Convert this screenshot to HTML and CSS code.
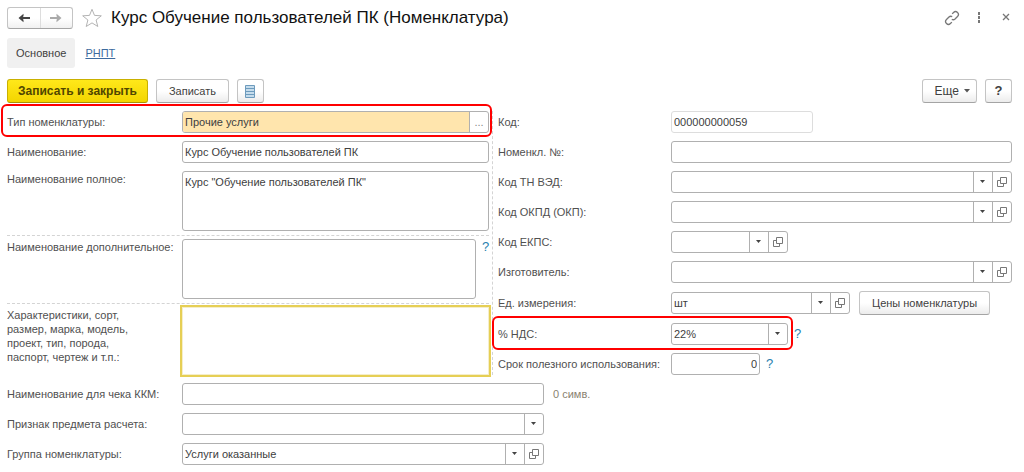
FILE: index.html
```
<!doctype html>
<html lang="ru">
<head>
	<meta charset="UTF-8">
	<meta name="viewport" content="width=device-width, initial-scale=1">
	<title>Курс Обучение пользователей ПК (Номенклатура)</title>
	<link rel="stylesheet" href="styles.css">
</head>
<body>
	<svg class="sprite" aria-hidden="true">
		<symbol id="open" viewBox="0 0 10 10"><path d="M3.500 .5h6v6h-6zM3.500 3.500h-3v6h6v-3" fill="none" stroke="#777"/></symbol>
	</svg>
	<header class="head">
		<div class="nav">
			<button type="button" aria-label="Назад"><svg width="14" height="10" viewBox="0 0 14 10"><path d="M13 5H4" stroke="#444" stroke-width="2"/><path d="M6.500 .8v2.400L4.800 5l1.700 1.800v2.400L1.500 5z" fill="#444"/></svg></button>
			<button type="button" aria-label="Вперед"><svg width="14" height="10" viewBox="0 0 14 10"><path d="M1 5h9" stroke="#aaa" stroke-width="2"/><path d="M7.500 .8v2.400L9.200 5 7.500 6.800v2.400l5-4.200z" fill="#aaa"/></svg></button>
		</div>
		<button type="button" class="icon star" aria-label="В избранное"><svg width="22" height="20" viewBox="0 0 22 20"><path d="M11 1.300l2.500 6.100 6.800.4-5.200 4.200 1.700 6.500L11 14.900l-5.800 3.600L6.900 12 1.700 7.800l6.800-.4z" fill="#fff" stroke="#b4b4b4"/></svg></button>
		<h1>Курс Обучение пользователей ПК (Номенклатура)</h1>
		<div class="tools">
			<button type="button" class="icon" aria-label="Ссылка"><svg width="16" height="16" viewBox="0 0 16 16"><g transform="rotate(-45 8 8)" fill="none" stroke="#777" stroke-width="1.300"><path d="M5 10.800H3a2.800 2.800 0 0 1 0-5.600h3.500a2.800 2.800 0 0 1 2.600 2M11 5.200h2a2.800 2.800 0 0 1 0 5.600H9.500a2.800 2.800 0 0 1-2.600-2"/></g></svg></button>
			<button type="button" class="icon" aria-label="Меню"><svg width="16" height="16" viewBox="0 0 16 16"><path d="M7 2h2v3H7zM7 6h2v3H7zM7 10h2v3H7z" fill="#777"/></svg></button>
			<button type="button" class="icon" aria-label="Закрыть"><svg width="16" height="16" viewBox="0 0 16 16"><path d="M5 4l6 6M11 4l-6 6" stroke="#777" stroke-width="1.300"/></svg></button>
		</div>
	</header>
	<nav class="tabs">
		<a href="#" class="active">Основное</a>
		<a href="#">РНПТ</a>
	</nav>
	<div class="toolbar">
		<button type="button" class="btn primary">Записать и закрыть</button>
		<button type="button" class="btn">Записать</button>
		<button type="button" class="btn small" aria-label="Список"><svg width="10" height="13" viewBox="0 0 10 13"><path d="M.5.5h9v12h-9z" fill="#c5dcec" stroke="#6d9bbd"/><path d="M1 3.500h8M1 6.500h8M1 9.500h8" stroke="#6d9bbd"/></svg></button>
		<button type="button" class="btn more">Еще <svg width="6" height="4" viewBox="0 0 6 4"><path d="M0 0h6L3 3.500z" fill="#555"/></svg></button>
		<button type="button" class="btn small question">?</button>
	</div>
	<form>
		<div class="columns">
			<div class="left">
				<div class="group">
					<div class="row marked">
						<label for="type">Тип номенклатуры:</label>
						<div class="field required"><input id="type" type="text" value="Прочие услуги"><button type="button" class="dots" aria-label="Выбрать">...</button></div>
					</div>
					<div class="row">
						<label for="name">Наименование:</label>
						<div class="field"><input id="name" type="text" value="Курс Обучение пользователей ПК"></div>
					</div>
					<div class="row tall">
						<label for="full">Наименование полное:</label>
						<textarea id="full">Курс "Обучение пользователей ПК"</textarea>
					</div>
				</div>
				<div class="group">
					<div class="row tall">
						<label for="extra">Наименование дополнительное:</label>
						<textarea id="extra"></textarea>
						<a href="#" class="help">?</a>
					</div>
				</div>
				<div class="group">
					<div class="row tall">
						<label for="features" class="multi"><span>Характеристики, сорт, размер, марка, модель, проект, тип, порода, паспорт, чертеж и т.п.:</span></label>
						<textarea id="features" class="current"></textarea>
					</div>
				</div>
			</div>
			<div class="right">
				<div class="row">
					<label for="code">Код:</label>
					<div class="field code"><input id="code" type="text" value="000000000059" readonly></div>
				</div>
				<div class="row">
					<label for="number">Номенкл. №:</label>
					<div class="field"><input id="number" type="text"></div>
				</div>
				<div class="row">
					<label for="tnved">Код ТН ВЭД:</label>
					<div class="field"><select id="tnved"><option></option></select><button type="button" aria-label="Открыть"><svg width="10" height="10"><use href="#open"/></svg></button></div>
				</div>
				<div class="row">
					<label for="okpd">Код ОКПД (ОКП):</label>
					<div class="field"><select id="okpd"><option></option></select><button type="button" aria-label="Открыть"><svg width="10" height="10"><use href="#open"/></svg></button></div>
				</div>
				<div class="row">
					<label for="ekps">Код ЕКПС:</label>
					<div class="field short"><select id="ekps"><option></option></select><button type="button" aria-label="Открыть"><svg width="10" height="10"><use href="#open"/></svg></button></div>
				</div>
				<div class="row">
					<label for="maker">Изготовитель:</label>
					<div class="field"><select id="maker"><option></option></select><button type="button" aria-label="Открыть"><svg width="10" height="10"><use href="#open"/></svg></button></div>
				</div>
				<div class="row">
					<label for="unit">Ед. измерения:</label>
					<div class="field unit"><select id="unit"><option>шт</option></select><button type="button" aria-label="Открыть"><svg width="10" height="10"><use href="#open"/></svg></button></div>
					<button type="button" class="btn prices">Цены номенклатуры</button>
				</div>
				<div class="row">
					<div class="row marked">
						<label for="vat">% НДС:</label>
						<div class="field short"><select id="vat"><option>22%</option></select></div>
					</div>
					<a href="#" class="help">?</a>
				</div>
				<div class="row">
					<label for="term">Срок полезного использования:</label>
					<div class="field term"><input id="term" type="text" value="0"></div>
					<a href="#" class="help">?</a>
				</div>
			</div>
		</div>
		<div class="bottom">
			<div class="row">
				<label for="kkm">Наименование для чека ККМ:</label>
				<div class="field"><input id="kkm" type="text"></div>
				<span class="count">0 симв.</span>
			</div>
			<div class="row">
				<label for="sign">Признак предмета расчета:</label>
				<div class="field"><select id="sign"><option></option></select></div>
			</div>
			<div class="row">
				<label for="group">Группа номенклатуры:</label>
				<div class="field"><select id="group"><option>Услуги оказанные</option></select><button type="button" aria-label="Открыть"><svg width="10" height="10"><use href="#open"/></svg></button></div>
			</div>
		</div>
	</form>
</body>
</html>
```
FILE: styles.css
```
* { margin: 0; padding: 0; box-sizing: border-box;}
body { padding: 7px 12px 6px 7px; font: 11px/16px "Liberation Sans", Arial, sans-serif; color: #404040; background: #fff;}
button, input, select, textarea { font: inherit; color: inherit; border: 0; background: none;}
button { display: flex; align-items: center; justify-content: center;}
svg { display: block; flex: none;}
.sprite { position: absolute; width: 0; height: 0;}

/* header */
.head { display: flex; align-items: center; height: 22px;}
.nav { display: flex; width: 66px; height: 22px; border: 1px solid #c4c4c4; border-bottom-color: #a4a4a4; border-radius: 3px; background: linear-gradient(#fff 50%, #f0f0f0);}
.nav button { flex: 1;}
.nav button + button { border-left: 1px solid #ddd;}
.star { margin: 0 8px;}
h1 { font-size: 17px; line-height: 22px; font-weight: normal; color: #111; white-space: nowrap;}
.tools { display: flex; gap: 11px; margin: 0 -2px 0 auto;}

.tabs { display: flex; gap: 10px; margin: 9px 0 11px; line-height: 30px;}
.tabs a { color: #3d6a9e;}
.tabs .active { padding: 0 9px; color: #404040; text-decoration: none; background: #f0f0f0; border-radius: 3px;}

.toolbar { display: flex; gap: 8px; margin-bottom: 8px;}
.btn { height: 24px; padding: 0 12px; border: 1px solid #c4c4c4; border-bottom-color: #a4a4a4; border-radius: 3px; background: linear-gradient(#fff 50%, #ececec); white-space: nowrap;}
.primary { padding: 0 10px; font-size: 12px; font-weight: bold; color: #504600; border-color: #c9b000 #c9b000 #a89300; background: linear-gradient(#ffe81a, #f3d500);}
.small { width: 27px; padding: 0;}
.more { gap: 5px; margin-left: auto; padding: 0 6px 0 12px; font-size: 12px;}
.question { font-size: 13px; font-weight: bold;}

/* form */
.columns { display: grid; grid-template-columns: minmax(0, 486fr) minmax(0, 519fr);}
.left { padding-right: 3px; border-right: 1px dashed #d4d4d4;}
.group { display: flex; flex-direction: column; gap: 8px; padding-bottom: 4px;}
.group + .group { padding-top: 3px; border-top: 1px dashed #d4d4d4;}
.group:last-child { padding-bottom: 0;}
.right { display: flex; flex-direction: column; gap: 8px; padding-left: 5px;}
.bottom { display: flex; flex-direction: column; gap: 8px; margin-top: 8px;}
.row { display: flex; align-items: center; position: relative;}
.row label { flex: none; width: 175px; color: #505050; white-space: nowrap;}
.right label { width: 173px;}
.tall { align-items: flex-start;}
.row .multi { padding-top: 1px; line-height: 14px; white-space: normal;}
.multi span { display: block; width: 132px;}

.field { display: flex; flex: 1; min-width: 0; height: 22px; border: 1px solid #b0b0b0; border-radius: 3px; overflow: hidden;}
.field input, .field select { flex: 1; min-width: 0; width: 0; padding: 0 2px;}
.field select { appearance: none; background: url("data:image/svg+xml,%3Csvg xmlns='http://www.w3.org/2000/svg' width='19' height='20'%3E%3Cpath d='M.5 0v20' stroke='%23b0b0b0'/%3E%3Cpath d='M7 8h5l-2.500 3z' fill='%23444'/%3E%3C/svg%3E") no-repeat right center;}
.field button { flex: none; width: 19px; border-left: 1px solid #b0b0b0;}
.required input { background: #ffe5ad;}
.field .dots { color: #888;}
.row .code { flex: none; width: 142px; border-color: #ddd;}
.short { flex: none; width: 117px;}
.unit { flex: none; width: 179px;}
.term { flex: none; width: 89px;}
.term input { text-align: right;}
.bottom .field { flex: 0 1 362px;}
.prices { margin-left: 9px;}

textarea { display: block; flex: 1; min-width: 0; height: 60px; padding: 2px; border: 1px solid #b0b0b0; border-radius: 3px; resize: none;}
.current { height: 68px; border-color: #f5eeca; border-radius: 0; outline: 2px solid #e6cf55;}
.help { width: 13px; padding-left: 6px; font-size: 13px; color: #2a7fae; text-decoration: none;}
.count { margin-left: 9px; color: #8a8270;}

/* red frames lie over the rows */
.marked::after { content: ""; position: absolute; inset: -7px -3px -4px -6px; border: 2px solid #f00; border-radius: 6px; pointer-events: none;}
.right .marked::after { inset: -7px -5px -5px -6px;}
```
